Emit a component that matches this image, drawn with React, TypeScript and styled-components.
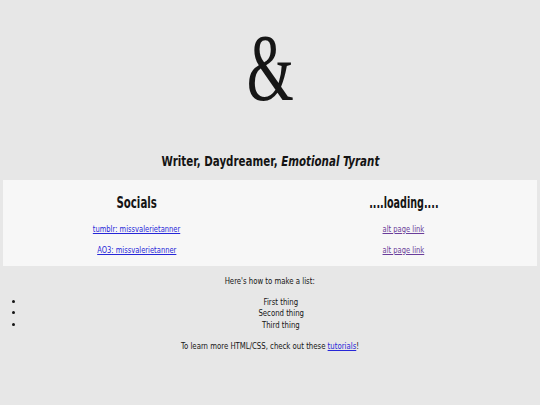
import React from "react";
import styled, { createGlobalStyle } from "styled-components";

const GlobalStyle = createGlobalStyle`
  html, body {
    margin: 0;
    padding: 0;
    background-color: #e7e7e7;
  }
  body {
    font-family: "DejaVu Sans", sans-serif;
    color: #141414;
  }
`;

const Page = styled.div`
  width: 540px;
  height: 405px;
  padding: 0 3px;
  box-sizing: border-box;
  display: flex;
  flex-direction: column;
  align-items: stretch;
`;

// the reference text is set in a narrow face; squeeze DejaVu to match
const Squeeze = styled.span<{ $x?: number }>`
  display: inline-block;
  white-space: nowrap;
  transform: scaleX(${(p) => p.$x ?? 0.73});
  transform-origin: center;
`;

const Logo = styled.div`
  text-align: center;
  margin-top: 20px;
  height: 96px;
`;

const Ampersand = styled.span`
  display: inline-block;
  font-family: "Liberation Serif", "Times New Roman", serif;
  font-size: 96px;
  line-height: 96px;
  color: #161616;
  transform: scaleX(0.63);
`;

const Tagline = styled.h1`
  font-size: 14.5px;
  font-weight: bold;
  text-align: center;
  margin: 37px 0 11px;

  em {
    font-style: italic;
  }
`;

const Panel = styled.div`
  background-color: #f7f7f7;
  display: grid;
  grid-template-columns: 1fr 1fr;
  padding: 13px 0 1px;
`;

const Column = styled.div`
  display: flex;
  flex-direction: column;
  align-items: center;
`;

const ColumnTitle = styled.h2`
  font-size: 16px;
  font-weight: bold;
  margin: 0 0 11px;
`;

const LinkText = styled.a<{ $visited?: boolean }>`
  display: inline-block;
  font-size: 9.5px;
  line-height: 11px;
  margin-bottom: 10px;
  color: ${(p) => (p.$visited ? "#6a3d9a" : "#2626d8")};
  text-decoration: underline;
  white-space: nowrap;
  transform: scaleX(0.71);
`;

const Body = styled.div`
  font-size: 9.5px;
  line-height: 11.5px;
  text-align: center;
  padding-top: 9px;
`;

const Para = styled.p`
  margin: 0;
`;

const List = styled.ul`
  margin: 9px 0 10px;
  padding-left: 22px;
  text-align: center;
`;

const Blue = styled.a`
  color: #2626d8;
  text-decoration: underline;
`;

export default function App() {
  return (
    <>
      <GlobalStyle />
      <Page>
        <Logo>
          <Ampersand>&amp;</Ampersand>
        </Logo>
        <Tagline>
          <Squeeze $x={0.71}>
            Writer, Daydreamer, <em>Emotional Tyrant</em>
          </Squeeze>
        </Tagline>
        <Panel>
          <Column>
            <ColumnTitle>
              <Squeeze $x={0.64}>Socials</Squeeze>
            </ColumnTitle>
            <LinkText href="#">tumblr: missvalerietanner</LinkText>
            <LinkText href="#">AO3: missvalerietanner</LinkText>
          </Column>
          <Column>
            <ColumnTitle>
              <Squeeze $x={0.6}>....loading....</Squeeze>
            </ColumnTitle>
            <LinkText href="#" $visited>alt page link</LinkText>
            <LinkText href="#" $visited>alt page link</LinkText>
          </Column>
        </Panel>
        <Body>
          <Para>
            <Squeeze>Here's how to make a list:</Squeeze>
          </Para>
          <List>
            <li><Squeeze>First thing</Squeeze></li>
            <li><Squeeze>Second thing</Squeeze></li>
            <li><Squeeze>Third thing</Squeeze></li>
          </List>
          <Para>
            <Squeeze>
              To learn more HTML/CSS, check out these <Blue href="#">tutorials</Blue>!
            </Squeeze>
          </Para>
        </Body>
      </Page>
    </>
  );
}
